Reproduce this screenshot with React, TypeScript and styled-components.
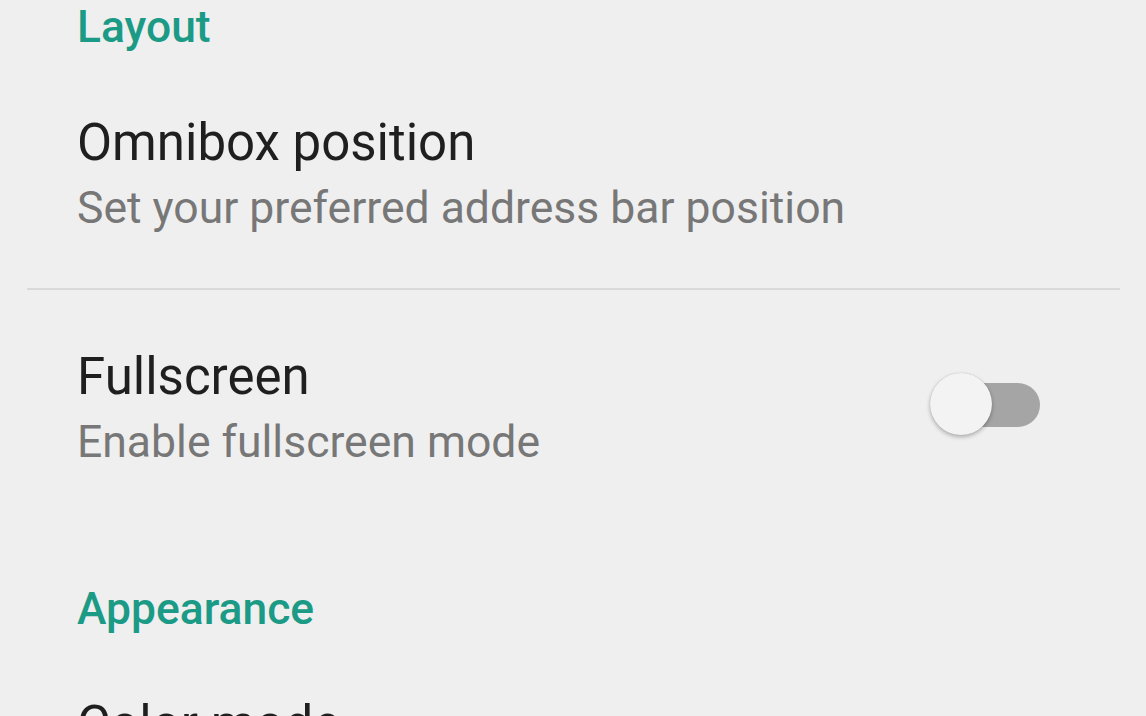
import styled, { createGlobalStyle } from 'styled-components';

const GlobalStyle = createGlobalStyle`
  html, body {
    margin: 0;
    padding: 0;
    background: #efefef;
    overflow: hidden;
  }
  body {
    font-family: Roboto, "Noto Sans", "Liberation Sans", sans-serif;
  }
`;

type Pref = {
  title: string;
  summary: string;
  toggle?: boolean;
};

const sections: { name: string; prefs: Pref[] }[] = [
  {
    name: 'Layout',
    prefs: [
      {
        title: 'Omnibox position',
        summary: 'Set your preferred address bar position',
      },
      { title: 'Fullscreen', summary: 'Enable fullscreen mode', toggle: false },
    ],
  },
  {
    name: 'Appearance',
    prefs: [{ title: 'Color mode', summary: 'Choose light or dark theme' }],
  },
];

function App() {
  return (
    <>
      <GlobalStyle />
      <Screen>
        {sections.map((section, si) => (
          <Section key={section.name} $first={si === 0}>
            <CategoryTitle>{section.name}</CategoryTitle>
            {section.prefs.map((pref, pi) => (
              <div key={pref.title}>
                {pi > 0 && <Divider />}
                <PrefRow>
                  <PrefText>
                    <PrefTitle>{pref.title}</PrefTitle>
                    <PrefSummary>{pref.summary}</PrefSummary>
                  </PrefText>
                  {pref.toggle !== undefined && (
                    <Switch>
                      <Track $on={pref.toggle} />
                      <Thumb $on={pref.toggle} />
                    </Switch>
                  )}
                </PrefRow>
              </div>
            ))}
          </Section>
        ))}
      </Screen>
    </>
  );
}

export default App;

const Screen = styled.div`
  width: 1146px;
  height: 716px;
  overflow: hidden;
  display: flex;
  flex-direction: column;
`;

const Section = styled.section<{ $first: boolean }>`
  display: flex;
  flex-direction: column;
  margin-top: ${(p) => (p.$first ? '0' : '60px')};
`;

const CategoryTitle = styled.h3`
  margin: 0;
  padding-left: 77px;
  font-size: 44.4px;
  line-height: 54px;
  font-weight: 500;
  color: #1b9a86;
`;

const Divider = styled.hr`
  margin: 0 26px 0 27px;
  border: none;
  height: 2px;
  background: #d9d9d9;
`;

const PrefRow = styled.div`
  display: flex;
  align-items: center;
  padding: 59px 106px 52px 77px;

  div + div > & {
    padding-top: 57px;
  }
`;

const PrefText = styled.div`
  flex: 1;
  display: flex;
  flex-direction: column;
  gap: 7px;
`;

const PrefTitle = styled.div`
  font-size: 51px;
  line-height: 60px;
  color: #1f1f1f;
`;

const PrefSummary = styled.div`
  font-size: 44.5px;
  line-height: 56px;
  color: #777777;
`;

const Switch = styled.div`
  position: relative;
  width: 110px;
  height: 64px;
  margin-top: -8px;
`;

const Track = styled.div<{ $on: boolean }>`
  position: absolute;
  right: 0;
  top: 10px;
  width: 92px;
  height: 44px;
  border-radius: 22px;
  background: ${(p) => (p.$on ? '#80cbc4' : '#a5a5a5')};
`;

const Thumb = styled.div<{ $on: boolean }>`
  position: absolute;
  top: 0;
  left: ${(p) => (p.$on ? '46px' : '0')};
  width: 62px;
  height: 62px;
  border-radius: 50%;
  background: ${(p) => (p.$on ? '#1b9a86' : '#f3f3f3')};
  box-shadow: 0 2px 4px rgba(0, 0, 0, 0.28), 0 0 1px rgba(0, 0, 0, 0.2);
`;
